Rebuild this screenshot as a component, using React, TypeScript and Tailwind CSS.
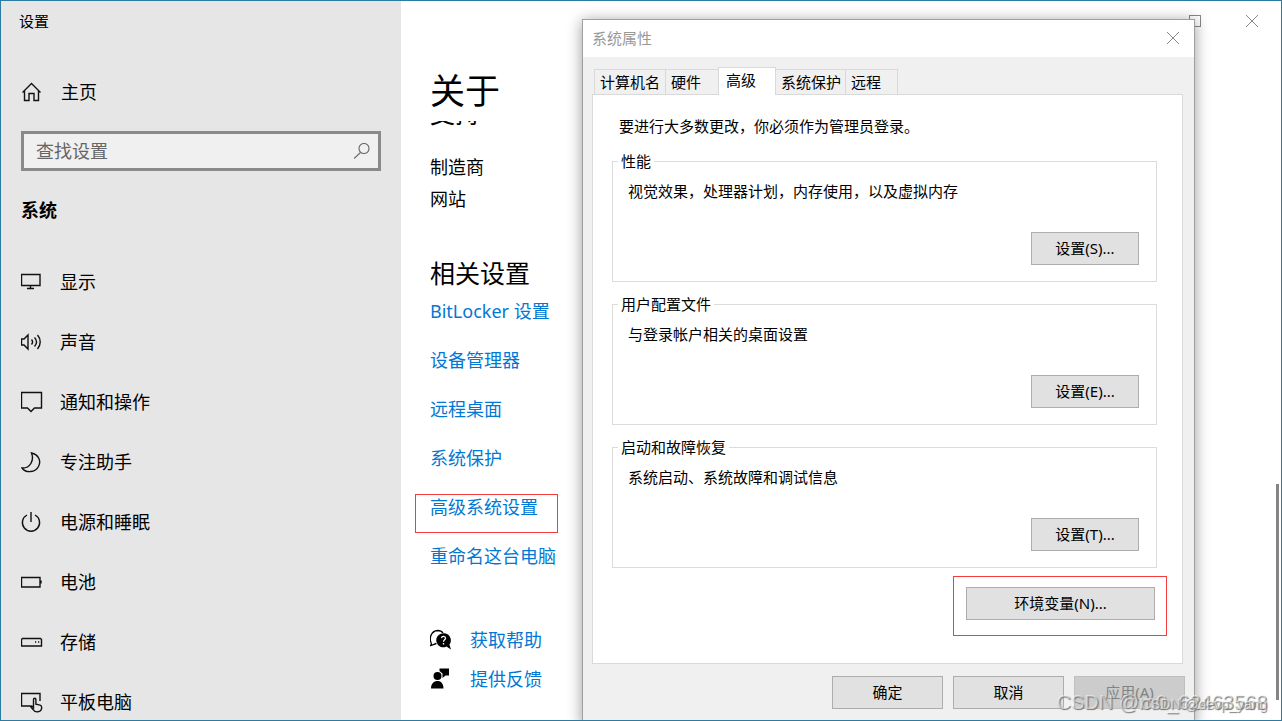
import type { ReactNode } from "react";

const navItems = [
  { key: "display", label: "显示" },
  { key: "sound", label: "声音" },
  { key: "notify", label: "通知和操作" },
  { key: "focus", label: "专注助手" },
  { key: "power", label: "电源和睡眠" },
  { key: "battery", label: "电池" },
  { key: "storage", label: "存储" },
  { key: "tablet", label: "平板电脑" },
];

const relatedLinks = [
  { label: "BitLocker 设置", marked: false },
  { label: "设备管理器", marked: false },
  { label: "远程桌面", marked: false },
  { label: "系统保护", marked: false },
  { label: "高级系统设置", marked: true },
  { label: "重命名这台电脑", marked: false },
];

const tabs = [
  { label: "计算机名", width: "w-[72px]", active: false },
  { label: "硬件", width: "w-[54px]", active: false },
  { label: "高级", width: "w-[58px]", active: true },
  { label: "系统保护", width: "w-[71px]", active: false },
  { label: "远程", width: "w-[53px]", active: false },
];

const groups = [
  { title: "性能", text: "视觉效果，处理器计划，内存使用，以及虚拟内存", button: "设置(S)..." },
  { title: "用户配置文件", text: "与登录帐户相关的桌面设置", button: "设置(E)..." },
  { title: "启动和故障恢复", text: "系统启动、系统故障和调试信息", button: "设置(T)..." },
];

const iconPaths: Record<string, ReactNode> = {
  home: <path d="M2 11.5 11 2.5l9 9M4 10v9.5h4.5v-7h5v7H18V10" />,
  display: <path d="M1 3.500h18.500v11H1zM10 14.500v3M6.500 17.500h7" />,
  sound: (
    <path d="M1 8h2.500L7.500 4v14l-4-4H1zM11 8.500c1.300 1.500 1.300 3.500 0 5M14 6.500c2.500 2.700 2.500 6.300 0 9M17 4c3.600 4 3.600 10 0 14" />
  ),
  notify: <path d="M1 1.500h20v15.500H14L10.500 20.500l-3.500-3.500H1z" />,
  focus: <path d="M11 2c7 1.500 10 8 7 13.500C15 21.500 5.500 22.500 1.500 17 9.500 17.500 14 9.500 11 2z" />,
  power: <path d="M10.500 1v10M6.500 4a8.600 8.600 0 1 0 8 0" />,
  battery: <path d="M1 6.500h18.500v9.500H1zM20.500 9.500v3" />,
  storage: <path d="M2 7.500h18l1 1v6.500H1V8.500zM14.500 11h1.200M17.500 11h1.200" />,
  tablet: (
    <path d="M10 15H1V2.500h18.500V10M12.500 18.500l-2.500-3c.800-1.200 2-.400 3 1V8.500c0-1.600 2.400-1.600 2.400 0v4.700l4.200.900c1.500.400 1.800 1.400 1.500 3.400-.500 4-6.600 4.500-8.600 1z" />
  ),
};

function Icon({ name }: { name: string }) {
  return (
    <svg viewBox="0.5 0 22 22" className="h-[22px] w-[22px] shrink-0" fill="none" stroke="#111" strokeWidth="1.4">
      {iconPaths[name]}
    </svg>
  );
}

function CloseIcon() {
  return (
    <svg viewBox="0 0 12 12" className="h-3 w-3" fill="none" stroke="#888" strokeWidth="1">
      <path d="M0 0l12 12M12 0L0 12" />
    </svg>
  );
}

function HelpIcon() {
  return (
    <svg viewBox="0 0 22 22" className="h-[22px] w-[22px] shrink-0">
      <path
        d="M6.500 14.500C4.500 15 2.500 16.500 0.500 16.500c1-1 1-2 .500-3C-1 8.500 1.500 2 7.500 1.500c3 0 4.500 1 5.500 2.500"
        fill="none"
        stroke="#000"
        strokeWidth="1.300"
      />
      <path d="M13.500 4.300a7 7 0 1 0 3 13.200l4.500 3-1.600-5A7 7 0 0 0 13.500 4.300z" fill="#000" />
      <path d="M11.500 9.200c.300-2.500 4-2.300 4 0 0 1.700-2 1.500-2 3.500M13.500 14v1.500" fill="none" stroke="#fff" strokeWidth="1.300" />
    </svg>
  );
}

function FeedbackIcon() {
  return (
    <svg viewBox="0 0 22 22" className="h-[22px] w-[22px] shrink-0" fill="#000">
      <circle cx="7.500" cy="8" r="4" />
      <path d="M1 20.500c0-5 3-7.500 6.500-7.500S13.500 15.500 13.500 20.500zM9.500 0.500H19v7h-3.500L12.500 10V5.500L9.500 3z" />
    </svg>
  );
}

function Sidebar() {
  return (
    <aside className="w-[400px] shrink-0 bg-[#e6e6e6] text-lg leading-6">
      <div className="px-[18px] pt-2 text-[15px]">设置</div>
      <a href="#home" className="mt-[47px] flex items-center gap-[18px] px-5">
        <Icon name="home" />
        主页
      </a>
      <label className="mx-5 mt-[27px] flex h-10 items-center border-[3px] border-[#8a8a8a] bg-[#f0f0f0] pr-2 pl-3">
        <input
          type="text"
          aria-label="查找设置"
          placeholder="查找设置"
          className="min-w-0 flex-1 bg-transparent outline-none placeholder:text-[#666]"
        />
        <svg viewBox="0 0 16 16" className="h-4 w-4" fill="none" stroke="#666" strokeWidth="1.100">
          <circle cx="10" cy="5.500" r="5" />
          <path d="M6.500 9.500 0 15.500" />
        </svg>
      </label>
      <h2 className="mt-[27px] px-5 font-bold">系统</h2>
      <nav className="mt-[30px]">
        {navItems.map((item) => (
          <a key={item.key} href={`#${item.key}`} className="flex h-[60px] items-center gap-[17px] px-5">
            <Icon name={item.key} />
            {item.label}
          </a>
        ))}
      </nav>
    </aside>
  );
}

function AboutPage() {
  return (
    <main className="flex-1 pt-[64px] pl-[29px] text-lg leading-6">
      <h1 className="text-[35px] leading-[52px]">关于</h1>
      {/* last line of the section that is scrolled under the title */}
      <div className="mt-1 flex h-2 items-end overflow-hidden text-[25px]">
        <span className="leading-8">支持</span>
      </div>
      <div className="mt-[26px]">制造商</div>
      <div className="mt-2">网站</div>
      <h2 className="mt-[44px] text-[25px] leading-9">相关设置</h2>
      <ul className="mt-2 text-[#0078d4]">
        {relatedLinks.map((link) => (
          <li key={link.label} className="relative mb-[25px]">
            <a href="#related">{link.label}</a>
            {link.marked && (
              <span className="pointer-events-none absolute -top-px -left-[15px] h-[39px] w-[143px] border border-[#f53b3b]" />
            )}
          </li>
        ))}
      </ul>
      <div className="mt-[60px] flex flex-col gap-[15px] text-[#0078d4]">
        <a href="#help" className="flex items-center gap-[18px]">
          <HelpIcon />
          获取帮助
        </a>
        <a href="#feedback" className="flex items-center gap-[18px]">
          <FeedbackIcon />
          提供反馈
        </a>
      </div>
    </main>
  );
}

function Button({ children, className }: { children: ReactNode; className: string }) {
  return (
    <button className={`h-[33px] border border-[#adadad] bg-[#e1e1e1] pb-[2px] ${className}`}>{children}</button>
  );
}

function PropertiesDialog() {
  return (
    <section
      role="dialog"
      aria-label="系统属性"
      className="absolute top-[18px] left-[581px] flex w-[613px] flex-col border border-[#a0a0a0] bg-[#f0f0f0] text-[15px] leading-5 shadow-[0_2px_14px_rgba(0,0,0,0.4)]"
    >
      <header className="flex h-[37px] items-center justify-between bg-white pr-[15px] pb-[2px] pl-[9px] text-[#999]">
        系统属性
        <button aria-label="关闭">
          <CloseIcon />
        </button>
      </header>
      <div className="pt-[10px] pr-[11px] pl-[9px]">
        <div role="tablist" className="flex h-[27px] items-end pl-[2px]">
          {tabs.map((tab) => (
            <button
              key={tab.label}
              role="tab"
              aria-selected={tab.active}
              className={`shrink-0 border border-b-0 border-[#d9d9d9] text-left whitespace-nowrap ${tab.width} ${
                tab.active ? "relative z-10 -mr-px -mb-px h-7 bg-white pb-[3px] pl-[7px]" : "-mr-px h-[25px] pl-[5px]"
              }`}
            >
              {tab.label}
            </button>
          ))}
        </div>
        <div className="border border-[#d9d9d9] bg-white px-[19px] pt-[21px] pb-[27px]">
          <p className="pl-[7px]">要进行大多数更改，你必须作为管理员登录。</p>
          <div className="mt-[15px] flex flex-col gap-3 pr-[6px]">
            {groups.map((group) => (
              <fieldset key={group.title} className="h-[131px] border border-[#dcdcdc] pr-[17px] pl-[15px]">
                <legend className="-ml-[10px] px-[3px]">{group.title}</legend>
                <p className="mt-[10px]">{group.text}</p>
                <div className="mt-[31px] flex justify-end">
                  <Button className="w-[108px]">{group.button}</Button>
                </div>
              </fieldset>
            ))}
          </div>
          <div className="-mr-1 mt-2 flex justify-end">
            <div className="h-[60px] border border-[#f53b3b] pt-[10px] pr-[11px] pl-3">
              <Button className="w-[189px]">环境变量(N)...</Button>
            </div>
          </div>
        </div>
      </div>
      <footer className="flex justify-end gap-[10px] px-[9px] pt-3 pb-[15px]">
        <Button className="w-[111px]">确定</Button>
        <Button className="w-[111px]">取消</Button>
        <button disabled className="h-[33px] w-[111px] border border-[#bfbfbf] bg-[#ccc] pb-[2px] text-[#838383]">
          应用(A)
        </button>
      </footer>
    </section>
  );
}

export default function App() {
  return (
    <div className="relative flex h-screen overflow-hidden border border-[#2b7ba3] bg-white font-['Noto_Sans','Noto_Sans_CJK_SC',sans-serif] text-black">
      <Sidebar />
      <AboutPage />
      <div className="absolute top-[14px] right-[23px] flex items-center gap-[45px]">
        <button aria-label="最大化" className="h-3 w-3 border border-[#888]" />
        <button aria-label="关闭">
          <CloseIcon />
        </button>
      </div>
      <PropertiesDialog />
      <div className="absolute right-[2px] bottom-5 h-[216px] w-[3px] bg-[#858585]" />
      <div className="absolute right-[14px] bottom-[6px] font-['Liberation_Sans',sans-serif] text-xl leading-6 text-white/50 [text-shadow:1px_1px_1px_#777]">
        CSDN @m0_62463568
      </div>
      <div className="absolute right-[14px] bottom-[6px] font-['Liberation_Sans',sans-serif] text-sm leading-5 text-white/50 [text-shadow:1px_1px_1px_#777]">
        CSDN @devp_yang
      </div>
    </div>
  );
}
